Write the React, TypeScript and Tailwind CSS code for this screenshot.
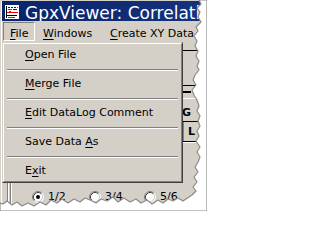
import React from "react";

function AppIcon() {
  return (
    <svg width="16" height="16" viewBox="0 0 16 16" shapeRendering="crispEdges">
      <rect x="0" y="0" width="16" height="16" fill="#0a246a" />
      <rect x="1" y="1" width="14" height="14" fill="#ffffff" />
      <rect x="2" y="2" width="1" height="12" fill="#000000" />
      <rect x="4" y="3" width="2" height="1" fill="#0000ff" />
      <rect x="7" y="3" width="2" height="1" fill="#0000ff" />
      <rect x="10" y="3" width="2" height="1" fill="#0000ff" />
      <rect x="13" y="3" width="1" height="1" fill="#ff0000" />
      <rect x="4" y="5" width="4" height="1" fill="#ff0000" />
      <rect x="9" y="5" width="4" height="1" fill="#0000ff" />
      <rect x="3" y="8" width="11" height="1" fill="#ff0000" />
      <rect x="5" y="7" width="2" height="1" fill="#ff0000" />
      <rect x="3" y="11" width="10" height="1" fill="#000000" />
      <rect x="4" y="13" width="7" height="1" fill="#ff0000" />
    </svg>
  );
}

function Radio({ checked }: { checked?: boolean }) {
  return (
    <svg width="12" height="12" viewBox="0 0 12 12" className="shrink-0">
      <circle cx="6" cy="6" r="5" fill="#ffffff" />
      <path d="M2.11 9.89 A5.5 5.5 0 0 1 9.89 2.11" stroke="#808080" fill="none" />
      <path d="M9.89 2.11 A5.5 5.5 0 0 1 2.11 9.89" stroke="#ffffff" fill="none" />
      <path d="M2.82 9.18 A4.5 4.5 0 0 1 9.18 2.82" stroke="#404040" fill="none" />
      <path d="M9.18 2.82 A4.5 4.5 0 0 1 2.82 9.18" stroke="#d4d0c8" fill="none" />
      {checked && <circle cx="6" cy="6" r="2" fill="#000000" />}
    </svg>
  );
}

function Item({ children }: { children: React.ReactNode }) {
  return <div className="h-[20px] leading-[20px] pl-[21px] whitespace-nowrap">{children}</div>;
}

function Sep() {
  return (
    <div className="h-[9px] pt-[4px] mx-[3px]">
      <div className="h-px bg-[#808080]" />
      <div className="h-px bg-white" />
    </div>
  );
}

function U({ children }: { children: React.ReactNode }) {
  return <span className="underline decoration-1 underline-offset-[2px]">{children}</span>;
}

export default function App() {
  const edge =
    "M207 0 L199 0 L201 4 L197 8 L200 12 L198 17 L201 22 L196 27 L198 31 L194 36 L197 41 L195 46 L198 51 L196 56 L199 61 L197 66 L199 70 L195 75 L193 80 L196 85 L192 90 L194 95 L197 100 L199 106 L197 111 L200 116 L198 121 L200 126 L197 131 L199 136 L196 141 L200 147 L197 152 L200 157 L198 162 L195 167 L198 172 L194 177 L197 182 L193 187 L196 191 L192 195 L189 197 L186 199 L183 201 L178 198 L173 201 L168 199 L163 203 L158 200 L152 204 L147 200 L141 203 L136 199 L130 202 L124 198 L118 202 L113 197 L107 201 L101 199 L96 203 L90 200 L85 198 L80 202 L74 199 L68 203 L62 199 L57 203 L51 200 L46 205 L40 202 L34 206 L28 203 L22 206 L17 202 L12 205 L7 201 L3 204 L0 203 L0 211 L207 211 Z";

  return (
    <div className="relative w-[207px] h-[211px] overflow-hidden bg-white font-['DejaVu_Sans',sans-serif] text-[11px] text-black">
      <div className="w-full h-full bg-[#d4d0c8] pt-px pl-px">
        <div className="flex flex-col h-full border-l border-white">
          {/* Title bar */}
          <div className="h-[20px] shrink-0 flex items-start overflow-hidden bg-gradient-to-r from-[#0a246a] to-[#14327e]">
            <div className="ml-[2px] mt-[3px] shrink-0">
              <AppIcon />
            </div>
            <div className="ml-[5px] mt-[2px] text-[17px] leading-[20px] text-white whitespace-nowrap">
              GpxViewer: Correlation
            </div>
          </div>

          {/* Menu bar */}
          <div className="h-[21px] shrink-0 flex items-start pt-px whitespace-nowrap">
            <div className="ml-px w-[32px] h-[19px] border border-t-[#808080] border-l-[#808080] border-r-white border-b-white pl-[6px] pt-[4px] leading-[13px]">
              <U>F</U>ile
            </div>
            <div className="w-[68px] h-[19px] pl-[8px] pt-[5px] leading-[13px]">
              <U>W</U>indows
            </div>
            <div className="h-[19px] pl-[7px] pt-[5px] leading-[13px]">
              <U>C</U>reate XY Data
            </div>
          </div>

          {/* Content */}
          <div className="relative flex-1 flex flex-col">
            <div className="h-[141px] shrink-0 flex">
              <div className="w-[181px] shrink-0" />
              <div className="flex-1 flex flex-col">
                <div className="mt-[8px] h-px bg-black" />
                <div className="mt-[34px] h-px bg-black" />
                <div className="mt-[5px] h-[2px] w-[8px] bg-black" />
                <div className="mt-[5px] h-px bg-white" />
                <div className="mt-[7px] ml-[-1px] h-[13px] leading-[13px] font-bold">G</div>
                <div className="mt-[2px] h-px bg-black" />
                <div className="h-[19px] flex">
                  <div className="w-px bg-[#808080]" />
                  <div className="pl-[4px] pt-[3px] leading-[13px] font-bold">L</div>
                </div>
                <div className="h-px bg-black" />
                <div className="h-px bg-white" />
              </div>
            </div>

            <div className="flex-1 flex">
              <div className="ml-[5px] w-px bg-[#808080]" />
              <div className="w-px bg-white" />
              <div className="ml-px w-px bg-[#808080]" />
              <div className="w-px bg-white" />
              <div className="ml-[20px] mt-[7px] h-[12px] flex items-start">
                <div className="w-[57px] flex items-center gap-[4px]">
                  <Radio checked />
                  <span className="leading-[13px]">1/2</span>
                </div>
                <div className="w-[55px] flex items-center gap-[4px]">
                  <Radio />
                  <span className="leading-[13px]">3/4</span>
                </div>
                <div className="flex items-center gap-[4px]">
                  <Radio />
                  <span className="leading-[13px]">5/6</span>
                </div>
              </div>
            </div>

            {/* File dropdown menu */}
            <div className="absolute left-0 top-0 w-[181px] h-[141px] border border-t-[#d4d0c8] border-l-[#d4d0c8] border-r-[#404040] border-b-[#404040] bg-[#d4d0c8]">
              <div className="h-full flex flex-col border border-t-white border-l-white border-r-[#808080] border-b-[#808080] pt-px">
                <Item>
                  <U>O</U>pen File
                </Item>
                <Sep />
                <Item>
                  <U>M</U>erge File
                </Item>
                <Sep />
                <Item>
                  <U>E</U>dit DataLog Comment
                </Item>
                <Sep />
                <Item>
                  Save Data <U>A</U>s
                </Item>
                <Sep />
                <Item>
                  E<U>x</U>it
                </Item>
              </div>
            </div>
          </div>
        </div>
      </div>

      {/* Torn paper edge */}
      <svg className="absolute inset-0 pointer-events-none" width="207" height="211" viewBox="0 0 207 211">
        <path d={edge} fill="#ffffff" stroke="#8a8a8a" strokeWidth="1.2" strokeLinejoin="round" />
      </svg>
    </div>
  );
}
